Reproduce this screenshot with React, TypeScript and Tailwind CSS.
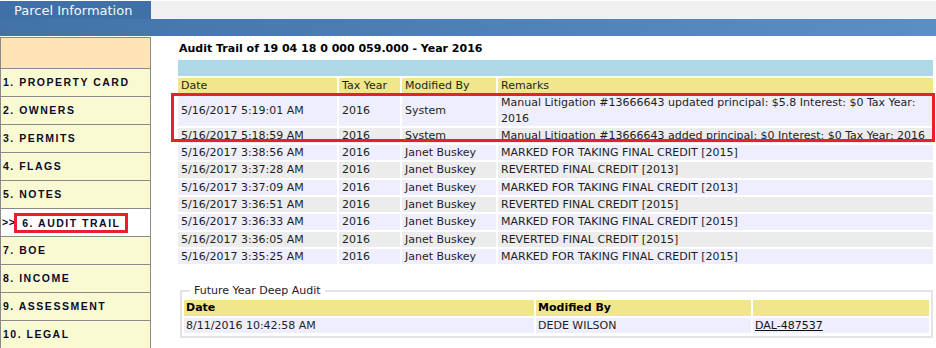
const menu = [
  "1. PROPERTY CARD",
  "2. OWNERS",
  "3. PERMITS",
  "4. FLAGS",
  "5. NOTES",
  "6. AUDIT TRAIL",
  "7. BOE",
  "8. INCOME",
  "9. ASSESSMENT",
  "10. LEGAL",
];

type AuditRow = {
  date: string;
  year: string;
  by: string;
  remarks: string;
};

const rows: AuditRow[] = [
  {
    date: "5/16/2017 5:19:01 AM",
    year: "2016",
    by: "System",
    remarks: "Manual Litigation #13666643 updated principal: $5.8 Interest: $0 Tax Year: 2016",
  },
  {
    date: "5/16/2017 5:18:59 AM",
    year: "2016",
    by: "System",
    remarks: "Manual Litigation #13666643 added principal: $0 Interest: $0 Tax Year: 2016",
  },
  { date: "5/16/2017 3:38:56 AM", year: "2016", by: "Janet Buskey", remarks: "MARKED FOR TAKING FINAL CREDIT [2015]" },
  { date: "5/16/2017 3:37:28 AM", year: "2016", by: "Janet Buskey", remarks: "REVERTED FINAL CREDIT [2013]" },
  { date: "5/16/2017 3:37:09 AM", year: "2016", by: "Janet Buskey", remarks: "MARKED FOR TAKING FINAL CREDIT [2013]" },
  { date: "5/16/2017 3:36:51 AM", year: "2016", by: "Janet Buskey", remarks: "REVERTED FINAL CREDIT [2015]" },
  { date: "5/16/2017 3:36:33 AM", year: "2016", by: "Janet Buskey", remarks: "MARKED FOR TAKING FINAL CREDIT [2015]" },
  { date: "5/16/2017 3:36:05 AM", year: "2016", by: "Janet Buskey", remarks: "REVERTED FINAL CREDIT [2015]" },
  { date: "5/16/2017 3:35:25 AM", year: "2016", by: "Janet Buskey", remarks: "MARKED FOR TAKING FINAL CREDIT [2015]" },
];

function Sidebar() {
  return (
    <div className="w-[151px] shrink-0 border-l border-r border-t border-[#8a8a8a] font-['Liberation_Sans',Arial,sans-serif] text-[10.5px] font-bold tracking-[1.5px] text-[#0b0b2a]">
      <div className="h-[31px] border-b border-[#8a8a8a] bg-[#ffe4b5]" />
      {menu.map((item) => {
        const active = item === "6. AUDIT TRAIL";
        return (
          <div
            key={item}
            className={
              active
                ? "flex h-[28px] items-center border-b border-[#8a8a8a] bg-white pl-[1px]"
                : "flex h-[28px] items-center border-b border-[#8a8a8a] bg-[#fafad2] pl-[2px]"
            }
          >
            {active ? (
              <>
                <span className="tracking-[0.5px]">&gt;&gt;</span>
                <span className="ml-[-1px] border-[3px] border-[#e8202a] pl-[5px] pr-[5px] leading-[14px]">{item}</span>
              </>
            ) : (
              item
            )}
          </div>
        );
      })}
    </div>
  );
}

function AuditTable() {
  return (
    <div className="relative">
      <table className="w-[759px] table-fixed border-separate border-spacing-[2px] text-[11px] leading-[15.3px] text-[#1e1e1e]">
        <colgroup>
          <col className="w-[159px]" />
          <col className="w-[61px]" />
          <col className="w-[94px]" />
          <col className="w-[435px]" />
        </colgroup>
        <tbody>
          <tr>
            <td colSpan={4} className="h-[16px] bg-[#add8e6]" />
          </tr>
          <tr className="bg-[#f0e68c]">
            <td className="px-[3px]">Date</td>
            <td className="px-[3px]">Tax Year</td>
            <td className="px-[3px]">Modified By</td>
            <td className="px-[3px]">Remarks</td>
          </tr>
          {rows.map((r, i) => (
            <tr key={i} className={i % 2 === 0 ? "bg-[#eeeefc]" : "bg-[#ececec]"}>
              <td className="px-[3px] align-middle">{r.date}</td>
              <td className="px-[3px] align-middle">{r.year}</td>
              <td className="px-[3px] align-middle">{r.by}</td>
              <td className="px-[3px] align-middle">{r.remarks}</td>
            </tr>
          ))}
        </tbody>
      </table>
      {/* highlight drawn over the two System rows */}
      <div className="pointer-events-none absolute left-[-5px] top-[35px] h-[49px] w-[764px] border-[3px] border-[#e8202a]" />
    </div>
  );
}

function DeepAudit() {
  return (
    <fieldset className="ml-[4px] mt-[18px] w-[753px] border-2 border-[#e4e4e4] pb-px">
      <legend className="ml-[8px] px-[4px] text-[11px] leading-[14px] text-[#222]">Future Year Deep Audit</legend>
      <table className="w-[749px] table-fixed border-separate border-spacing-[2px] text-[11px] leading-[15.3px] text-[#1e1e1e]">
        <colgroup>
          <col className="w-[350px]" />
          <col className="w-[215px]" />
          <col className="w-[176px]" />
        </colgroup>
        <tbody>
          <tr className="bg-[#f0e68c] font-bold text-black">
            <td className="px-[2px]">Date</td>
            <td className="px-[2px]">Modified By</td>
            <td className="px-[2px]" />
          </tr>
          <tr className="bg-[#eeeefc]">
            <td className="px-[2px]">8/11/2016 10:42:58 AM</td>
            <td className="px-[2px]">DEDE WILSON</td>
            <td className="px-[2px]">
              <a href="#" className="text-[#111] underline">
                DAL-487537
              </a>
            </td>
          </tr>
        </tbody>
      </table>
    </fieldset>
  );
}

export default function App() {
  return (
    <div className="h-[348px] w-[936px] overflow-hidden bg-white pt-px font-['DejaVu_Sans',Verdana,sans-serif]">
      <div className="flex h-[18px]">
        <div className="flex w-[151px] items-center bg-[#3f71a8] pl-[14px] pt-px text-[13px] text-[#f4f6ff]">
          Parcel Information
        </div>
        <div className="flex-1 bg-[#f0f0f0]" />
      </div>
      <div className="h-[17px] bg-gradient-to-r from-[#4272a8] to-[#5a8fc5]" />
      <div className="mt-px flex">
        <Sidebar />
        <div className="pl-[25px]">
          <div className="pl-[3px] pt-[5px] text-[11px] font-bold leading-[14px] text-black">
            Audit Trail of 19 04 18 0 000 059.000 - Year 2016
          </div>
          <div className="mt-[2px]">
            <AuditTable />
          </div>
          <DeepAudit />
        </div>
      </div>
    </div>
  );
}
